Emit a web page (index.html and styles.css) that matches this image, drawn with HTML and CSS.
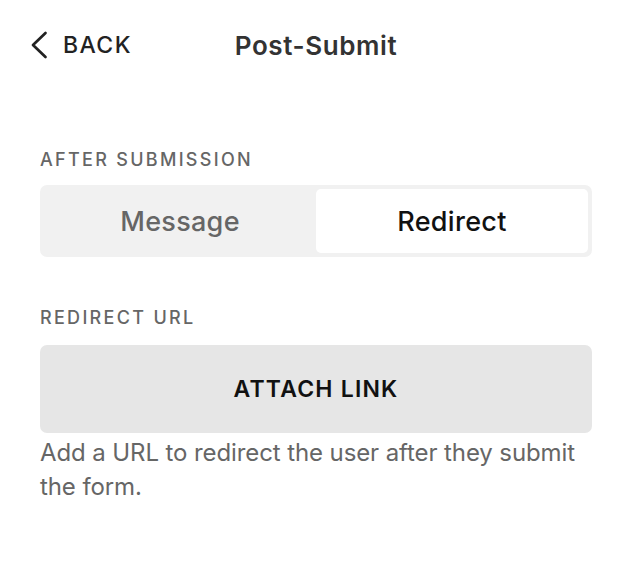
FILE: index.html
```html
<!DOCTYPE html>
<html lang="en">
<head>
  <meta charset="UTF-8">
  <meta name="viewport" content="width=device-width, initial-scale=1.0">
  <title>Post-Submit</title>
  <link rel="stylesheet" href="styles.css">
</head>
<body>
  <div class="panel">
    <div class="header">
      <a class="back" href="#">
        <svg class="chevron" width="18" height="28" viewBox="0 0 18 28">
          <path d="M15.5 2 L3 14 L15.5 26" fill="none" stroke="#222" stroke-width="2.7" stroke-linecap="round" stroke-linejoin="round"/>
        </svg>
        <span>BACK</span>
      </a>
      <h1>Post-Submit</h1>
    </div>

    <div class="section">
      <div class="label">AFTER SUBMISSION</div>
      <div class="segmented">
        <button type="button" class="segment">Message</button>
        <button type="button" class="segment active">Redirect</button>
      </div>
    </div>

    <div class="section">
      <div class="label">REDIRECT URL</div>
      <button type="button" class="attach">ATTACH LINK</button>
      <p class="help">Add a URL to redirect the user after they submit the form.</p>
    </div>
  </div>
</body>
</html>
```

FILE: styles.css
```css
body {
  font-family: Inter, "Noto Sans", sans-serif;
  margin: 0;
  background-color: #fff;
  color: #222;
}

.panel {
  padding: 20px 36px 0 40px;
}

.header {
  position: relative;
  height: 50px;
  display: flex;
  align-items: center;
  justify-content: center;
}

.back {
  position: absolute;
  left: -10px;
  top: 11px;
  display: flex;
  align-items: center;
  gap: 15px;
  color: #222;
  text-decoration: none;
  font-size: 23px;
  font-weight: 500;
  letter-spacing: 1.4px;
}

.chevron {
  display: block;
}

h1 {
  margin: 0;
  font-size: 26px;
  font-weight: 600;
  color: #333;
  letter-spacing: 0.6px;
}

.section {
  margin-top: 79px;
}

.section + .section {
  margin-top: 50px;
}

.label {
  font-size: 18px;
  font-weight: 500;
  letter-spacing: 2.3px;
  color: #666;
  line-height: 22px;
  margin-bottom: 14px;
}

.section + .section .label {
  margin-bottom: 16px;
}

.segmented {
  display: flex;
  padding: 4px;
  height: 72px;
  box-sizing: border-box;
  background-color: #f1f1f1;
  border-radius: 7px;
}

.segment {
  flex: 1;
  border: none;
  background: transparent;
  font-family: inherit;
  font-size: 27px;
  font-weight: 500;
  letter-spacing: 0.3px;
  color: #666;
  border-radius: 5px;
  cursor: pointer;
}

.segment.active {
  background-color: #fff;
  color: #111;
}

.attach {
  display: block;
  width: 100%;
  height: 88px;
  border: none;
  border-radius: 7px;
  background-color: #e6e6e6;
  font-family: inherit;
  font-size: 23px;
  font-weight: 600;
  letter-spacing: 1.2px;
  color: #111;
  cursor: pointer;
}

.help {
  margin: 3px 0 0;
  font-size: 24px;
  line-height: 34px;
  letter-spacing: -0.1px;
  color: #666;
}
```
